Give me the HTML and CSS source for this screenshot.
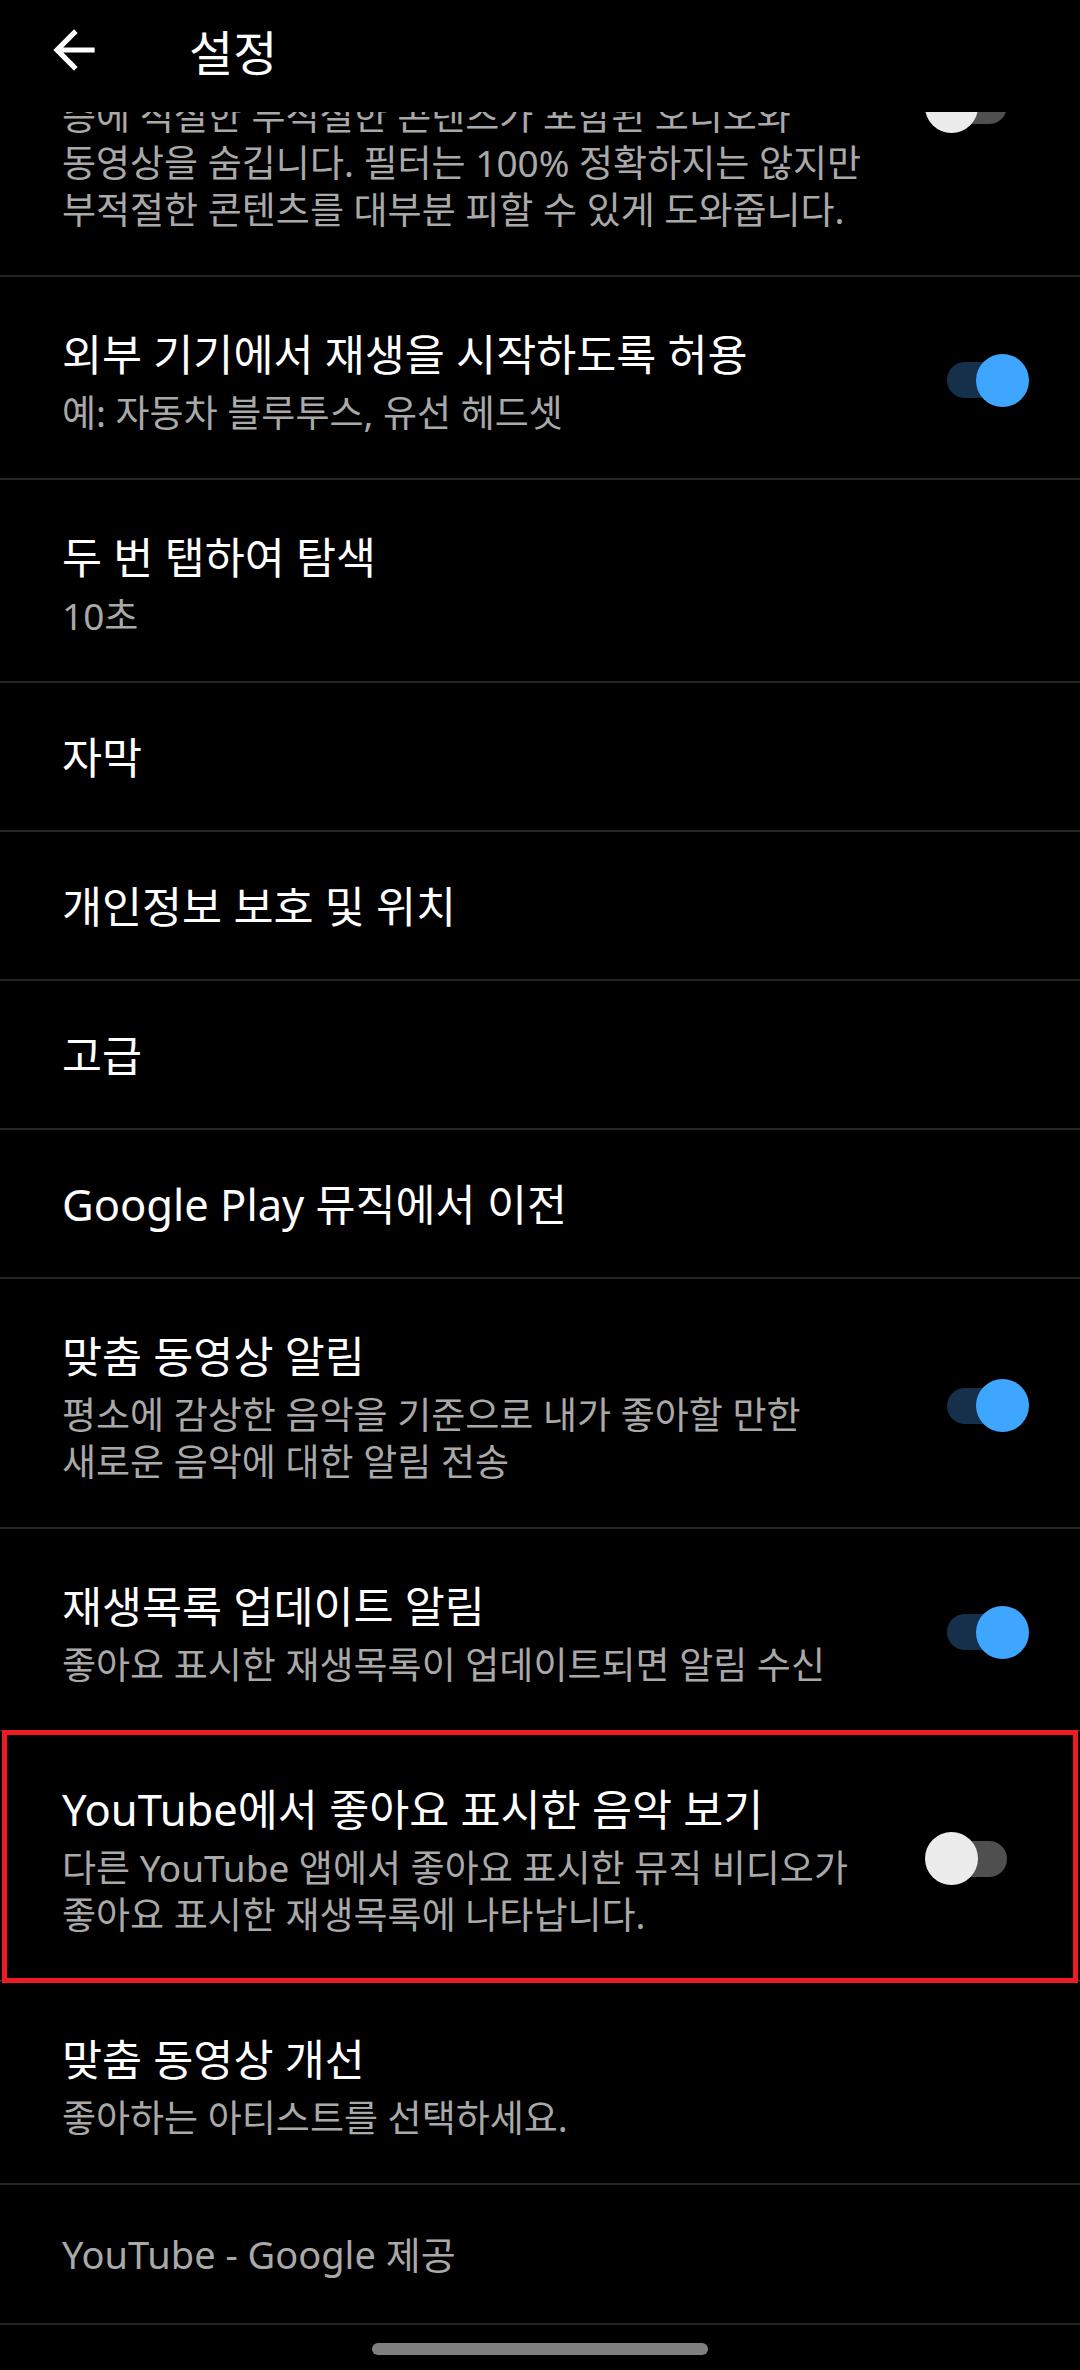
FILE: index.html
```html
<!DOCTYPE html>
<html lang="ko">
<head>
<meta charset="utf-8">
<title>설정</title>
<link rel="stylesheet" href="styles.css">
</head>
<body>
<div class="screen">
  <header class="appbar">
    <svg class="back" viewBox="0 0 24 24" width="62" height="62" aria-hidden="true">
      <path d="M20 11H7.83l5.59-5.59L12 4l-8 8 8 8 1.41-1.41L7.83 13H20v-2z" fill="#fff"/>
    </svg>
    <h1 class="appbar-title">설정</h1>
  </header>

  <main class="list">
    <div class="row first">
      <div class="text">
        <div class="sub">층에 적절한 부적절한 콘텐츠가 포함된 오디오와<br>동영상을 숨깁니다. 필터는 100% 정확하지는 않지만<br>부적절한 콘텐츠를 대부분 피할 수 있게 도와줍니다.</div>
      </div>
      <span class="switch"></span>
    </div>

    <div class="row">
      <div class="text">
        <div class="title">외부 기기에서 재생을 시작하도록 허용</div>
        <div class="sub">예: 자동차 블루투스, 유선 헤드셋</div>
      </div>
      <span class="switch on"></span>
    </div>

    <div class="row">
      <div class="text">
        <div class="title">두 번 탭하여 탐색</div>
        <div class="sub">10초</div>
      </div>
    </div>

    <div class="row single"><div class="text"><div class="title">자막</div></div></div>
    <div class="row single"><div class="text"><div class="title">개인정보 보호 및 위치</div></div></div>
    <div class="row single"><div class="text"><div class="title">고급</div></div></div>
    <div class="row single"><div class="text"><div class="title">Google Play 뮤직에서 이전</div></div></div>

    <div class="row">
      <div class="text">
        <div class="title">맞춤 동영상 알림</div>
        <div class="sub">평소에 감상한 음악을 기준으로 내가 좋아할 만한<br>새로운 음악에 대한 알림 전송</div>
      </div>
      <span class="switch on"></span>
    </div>

    <div class="row">
      <div class="text">
        <div class="title">재생목록 업데이트 알림</div>
        <div class="sub">좋아요 표시한 재생목록이 업데이트되면 알림 수신</div>
      </div>
      <span class="switch on"></span>
    </div>

    <div class="row highlighted">
      <div class="text">
        <div class="title">YouTube에서 좋아요 표시한 음악 보기</div>
        <div class="sub">다른 YouTube 앱에서 좋아요 표시한 뮤직 비디오가<br>좋아요 표시한 재생목록에 나타납니다.</div>
      </div>
      <span class="switch"></span>
    </div>

    <div class="row">
      <div class="text">
        <div class="title">맞춤 동영상 개선</div>
        <div class="sub">좋아하는 아티스트를 선택하세요.</div>
      </div>
    </div>

    <div class="row footer">
      <div class="text"><div class="sub">YouTube - Google 제공</div></div>
    </div>
  </main>

  <div class="navbar"><span class="pill"></span></div>
</div>
</body>
</html>
```

FILE: styles.css
```css
* { box-sizing: border-box; }

html, body {
  margin: 0;
  padding: 0;
  background: #000;
}

body {
  font-family: "Noto Sans", "Noto Sans CJK KR", sans-serif;
  color: #fff;
}

.screen {
  width: 1080px;
  height: 2370px;
  display: flex;
  flex-direction: column;
  background: #000;
  overflow: hidden;
}

.appbar {
  height: 112px;
  flex: 0 0 112px;
  display: flex;
  align-items: center;
  padding: 0 0 12px 43px;
  background: #000;
}

.back {
  display: block;
  flex: 0 0 auto;
}

.appbar-title {
  margin: 0 0 0 84px;
  font-family: "Noto Sans CJK KR", sans-serif;
  font-size: 48px;
  font-weight: 400;
  line-height: 60px;
}

.list {
  flex: 1 1 auto;
  overflow: hidden;
  display: flex;
  flex-direction: column;
}

.row {
  display: flex;
  align-items: center;
  padding: 47px 0 42px 62px;
  border-bottom: 2px solid #262626;
  position: relative;
  flex: 0 0 auto;
}

.row.first {
  margin-top: -20px;
  padding-top: 0;
}

.row.first .switch {
  align-self: flex-start;
  margin-top: -4px;
}

.row.single {
  padding-top: 44px;
  padding-bottom: 43px;
}

.row.footer {
  padding-top: 46px;
  padding-bottom: 45px;
}

.row.footer .sub {
  font-size: 38px;
}

.text {
  flex: 1 1 auto;
  min-width: 0;
}

.title {
  font-size: 43.5px;
  line-height: 60px;
  color: #fff;
  white-space: nowrap;
}

.sub {
  font-size: 37px;
  line-height: 47px;
  color: #a9a9a9;
  white-space: nowrap;
}

.title + .sub {
  margin-top: 5px;
}

.switch {
  flex: 0 0 60px;
  width: 60px;
  height: 36px;
  margin: 0 73px 0 20px;
  border-radius: 18px;
  background: #4f4f4f;
  position: relative;
}

.switch::after {
  content: "";
  position: absolute;
  top: -8.5px;
  left: -22px;
  width: 53px;
  height: 53px;
  border-radius: 50%;
  background: #ececec;
}

.switch.on {
  background: #16304b;
}

.switch.on::after {
  left: 29px;
  background: #3ea6ff;
}

.row.highlighted::after {
  content: "";
  position: absolute;
  top: -2px;
  bottom: -3px;
  left: 2px;
  right: 2px;
  border: 5px solid #ec1c24;
  pointer-events: none;
}

.navbar {
  flex: 0 0 45px;
  display: flex;
  justify-content: center;
  padding-top: 18px;
}

.pill {
  display: block;
  width: 336px;
  height: 12px;
  border-radius: 6px;
  background: #7f7f7f;
}
```
